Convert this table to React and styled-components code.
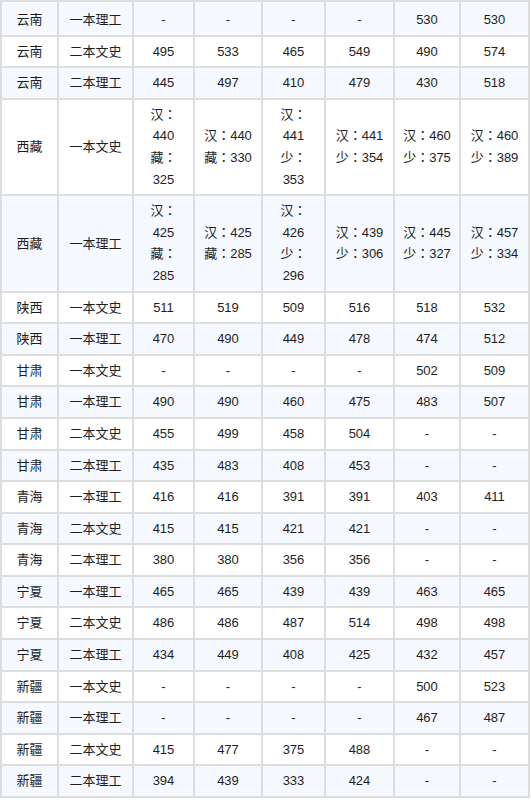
import React from 'react'
import styled, { createGlobalStyle } from 'styled-components'

const GlobalStyle = createGlobalStyle`
  html, body {
    margin: 0;
    padding: 0;
    background: #fff;
  }
`;

const Page = styled.div`
  width: 531px;
  overflow: hidden;
  font-family: "Liberation Sans", Arial, "Noto Sans CJK SC", sans-serif;
`;

const Table = styled.table`
  width: 528px;
  border-collapse: collapse;
  table-layout: fixed;
  margin-top: 0;
`;

const Row = styled.tr`
  background: ${p => (p.$shade ? '#f6f9ff' : '#fff')};

  &:first-child td {
    padding-top: 7px;
  }
`;

const Cell = styled.td`
  border: 2px solid #dddddd;
  padding: 4px 4px;
  text-align: center;
  vertical-align: middle;
  font-size: 13px;
  line-height: 21.6px;
  color: #1e1e1e;
`;

const Line = styled.div`
  white-space: nowrap;
  height: 21.6px;
`;

const Colon = styled.span`
  font-family: "Noto Sans CJK JP", "Noto Sans CJK TC", sans-serif;
  line-height: 1;
`;

const widths = [57, 75, 61, 68, 63, 69, 66, 69];

const rows = [
  ['云南', '一本理工', '-', '-', '-', '-', '530', '530'],
  ['云南', '二本文史', '495', '533', '465', '549', '490', '574'],
  ['云南', '二本理工', '445', '497', '410', '479', '430', '518'],
  ['西藏', '一本文史', ['汉：', '440', '藏：', '325'], ['汉：440', '藏：330'], ['汉：', '441', '少：', '353'], ['汉：441', '少：354'], ['汉：460', '少：375'], ['汉：460', '少：389']],
  ['西藏', '一本理工', ['汉：', '425', '藏：', '285'], ['汉：425', '藏：285'], ['汉：', '426', '少：', '296'], ['汉：439', '少：306'], ['汉：445', '少：327'], ['汉：457', '少：334']],
  ['陕西', '一本文史', '511', '519', '509', '516', '518', '532'],
  ['陕西', '一本理工', '470', '490', '449', '478', '474', '512'],
  ['甘肃', '一本文史', '-', '-', '-', '-', '502', '509'],
  ['甘肃', '一本理工', '490', '490', '460', '475', '483', '507'],
  ['甘肃', '二本文史', '455', '499', '458', '504', '-', '-'],
  ['甘肃', '二本理工', '435', '483', '408', '453', '-', '-'],
  ['青海', '一本理工', '416', '416', '391', '391', '403', '411'],
  ['青海', '二本文史', '415', '415', '421', '421', '-', '-'],
  ['青海', '二本理工', '380', '380', '356', '356', '-', '-'],
  ['宁夏', '一本理工', '465', '465', '439', '439', '463', '465'],
  ['宁夏', '二本文史', '486', '486', '487', '514', '498', '498'],
  ['宁夏', '二本理工', '434', '449', '408', '425', '432', '457'],
  ['新疆', '一本文史', '-', '-', '-', '-', '500', '523'],
  ['新疆', '一本理工', '-', '-', '-', '-', '467', '487'],
  ['新疆', '二本文史', '415', '477', '375', '488', '-', '-'],
  ['新疆', '二本理工', '394', '439', '333', '424', '-', '-'],
];

// split "汉：440" so the full-width colon can be drawn centred in its box
function renderLine(text) {
  const idx = text.indexOf('：');
  if (idx < 0) return text;
  return (
    <>
      {text.slice(0, idx)}
      <Colon>：</Colon>
      {text.slice(idx + 1)}
    </>
  );
}

function ScoreCell({ value }) {
  const lines = Array.isArray(value) ? value : [value];
  return (
    <Cell>
      {lines.map((l, i) => <Line key={i}>{renderLine(l)}</Line>)}
    </Cell>
  );
}

export default function App() {
  return (
    <Page>
      <GlobalStyle />
      <Table>
        <colgroup>
          {widths.map((w, i) => <col key={i} style={{ width: w }} />)}
        </colgroup>
        <tbody>
          {rows.map((r, i) => (
            <Row key={i} $shade={i % 2 === 0}>
              {r.map((v, j) => <ScoreCell key={j} value={v} />)}
            </Row>
          ))}
        </tbody>
      </Table>
    </Page>
  );
}
